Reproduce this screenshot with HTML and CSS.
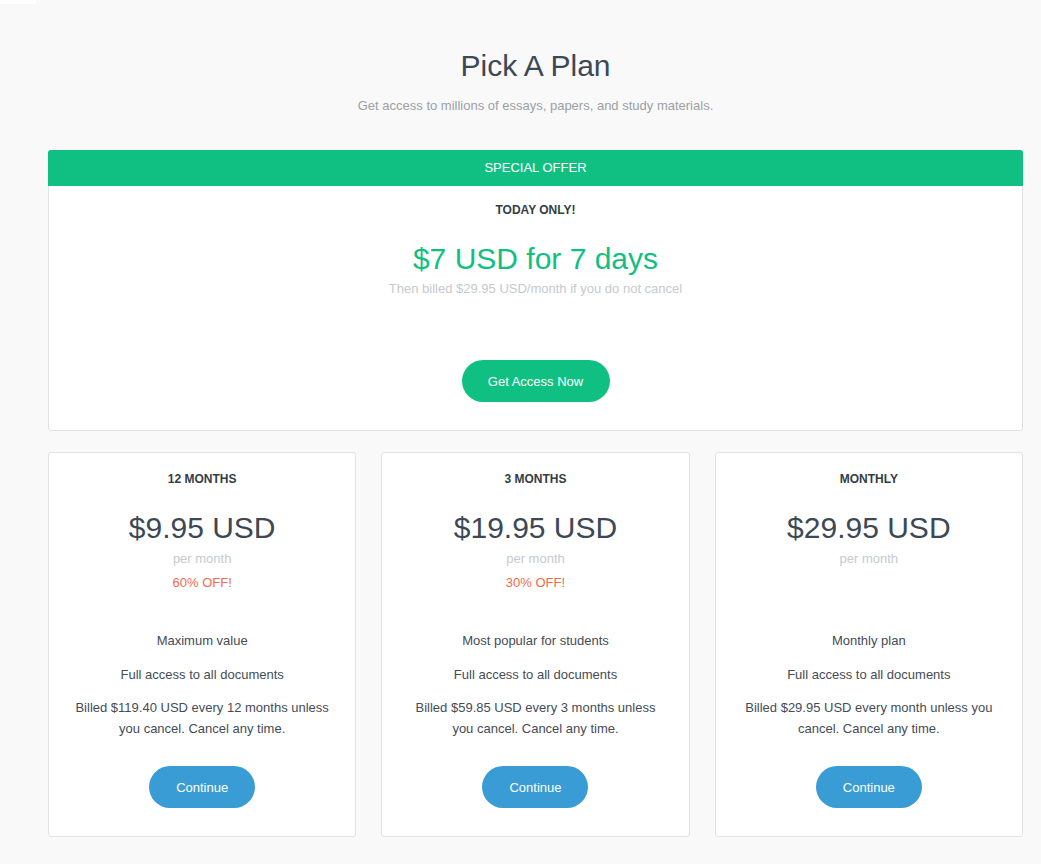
FILE: index.html
```html
<!DOCTYPE html>
<html lang="en">
<head>
<meta charset="utf-8">
<title>Pick A Plan</title>
<link rel="stylesheet" href="styles.css">
</head>
<body>
<div class="topstrip"></div>
<main class="page">
  <header class="intro">
    <h1 class="title">Pick A Plan</h1>
    <p class="subtitle">Get access to millions of essays, papers, and study materials.</p>
  </header>

  <section class="offer">
    <div class="offer-head">SPECIAL OFFER</div>
    <div class="offer-body">
      <div class="label">TODAY ONLY!</div>
      <div class="offer-price">$7 USD for 7 days</div>
      <div class="offer-note">Then billed $29.95 USD/month if you do not cancel</div>
      <button class="btn btn-green">Get Access Now</button>
    </div>
  </section>

  <section class="plans">
    <div class="plan">
      <div class="label">12 MONTHS</div>
      <div class="price">$9.95 USD</div>
      <div class="per">per month</div>
      <div class="off">60% OFF!</div>
      <div class="desc">Maximum value</div>
      <div class="desc desc-gap">Full access to all documents</div>
      <div class="billed">Billed $119.40 USD every 12 months unless you cancel. Cancel any time.</div>
      <button class="btn btn-blue">Continue</button>
    </div>
    <div class="plan">
      <div class="label">3 MONTHS</div>
      <div class="price">$19.95 USD</div>
      <div class="per">per month</div>
      <div class="off">30% OFF!</div>
      <div class="desc">Most popular for students</div>
      <div class="desc desc-gap">Full access to all documents</div>
      <div class="billed">Billed $59.85 USD every 3 months unless you cancel. Cancel any time.</div>
      <button class="btn btn-blue">Continue</button>
    </div>
    <div class="plan">
      <div class="label">MONTHLY</div>
      <div class="price">$29.95 USD</div>
      <div class="per">per month</div>
      <div class="off"></div>
      <div class="desc">Monthly plan</div>
      <div class="desc desc-gap">Full access to all documents</div>
      <div class="billed">Billed $29.95 USD every month unless you cancel. Cancel any time.</div>
      <button class="btn btn-blue">Continue</button>
    </div>
  </section>
</main>
</body>
</html>
```

FILE: styles.css
```css
* { box-sizing: border-box; }

html, body {
  margin: 0;
  padding: 0;
  background: #f9f9f9;
  font-family: "Liberation Sans", Arial, sans-serif;
  color: #444c55;
}

.topstrip {
  width: 36px;
  height: 4px;
  background: #ffffff;
}

.page {
  width: 975px;
  margin-left: 48px;
  padding-top: 44px;
  padding-bottom: 27px;
}

.intro { text-align: center; }

.title {
  margin: 0;
  font-size: 30px;
  line-height: 36px;
  font-weight: normal;
  color: #3c4954;
}

.subtitle {
  margin: 13px 0 0;
  font-size: 13px;
  line-height: 18px;
  color: #9ba0a5;
}

.offer {
  margin-top: 35px;
  background: #ffffff;
  border: 1px solid #e2e2e2;
  border-radius: 3px;
  text-align: center;
}

.offer-head {
  margin: -1px -1px 0;
  height: 36px;
  line-height: 36px;
  background: #10c083;
  color: #ffffff;
  font-size: 13px;
  border-radius: 3px 3px 0 0;
}

.offer-body {
  padding: 16px 20px 28px;
  display: flex;
  flex-direction: column;
  align-items: center;
}

.label {
  font-size: 12px;
  line-height: 16px;
  font-weight: bold;
  color: #333d46;
}

.offer-price {
  margin-top: 23px;
  font-size: 30px;
  line-height: 36px;
  color: #10c083;
}

.offer-note {
  margin-top: 3px;
  font-size: 13px;
  line-height: 18px;
  color: #c4cacf;
}

.btn {
  border: none;
  border-radius: 21px;
  height: 42px;
  font-family: "Liberation Sans", Arial, sans-serif;
  font-size: 13px;
  color: #ffffff;
  padding: 0;
}

.btn-green {
  margin-top: 62px;
  width: 148px;
  background: #10c083;
}

.btn-blue {
  margin-top: 27px;
  width: 106px;
  background: #3a9cd5;
}

.plans {
  margin-top: 21px;
  display: grid;
  grid-template-columns: 1fr 1fr 1fr;
  gap: 25px;
}

.plan {
  background: #ffffff;
  border: 1px solid #e2e2e2;
  border-radius: 3px;
  padding: 18px 22px 28px;
  display: flex;
  flex-direction: column;
  align-items: center;
  text-align: center;
}

.price {
  margin-top: 23px;
  font-size: 30px;
  line-height: 36px;
  color: #3c4954;
}

.per {
  margin-top: 4px;
  font-size: 13px;
  line-height: 18px;
  color: #c4cacf;
}

.off {
  margin-top: 6px;
  height: 18px;
  font-size: 13px;
  line-height: 18px;
  color: #f26b4b;
}

.desc {
  margin-top: 40px;
  font-size: 13px;
  line-height: 18px;
  color: #444c55;
}

.desc-gap { margin-top: 16px; }

.billed {
  margin-top: 13px;
  font-size: 13px;
  line-height: 21px;
  color: #444c55;
}
```
